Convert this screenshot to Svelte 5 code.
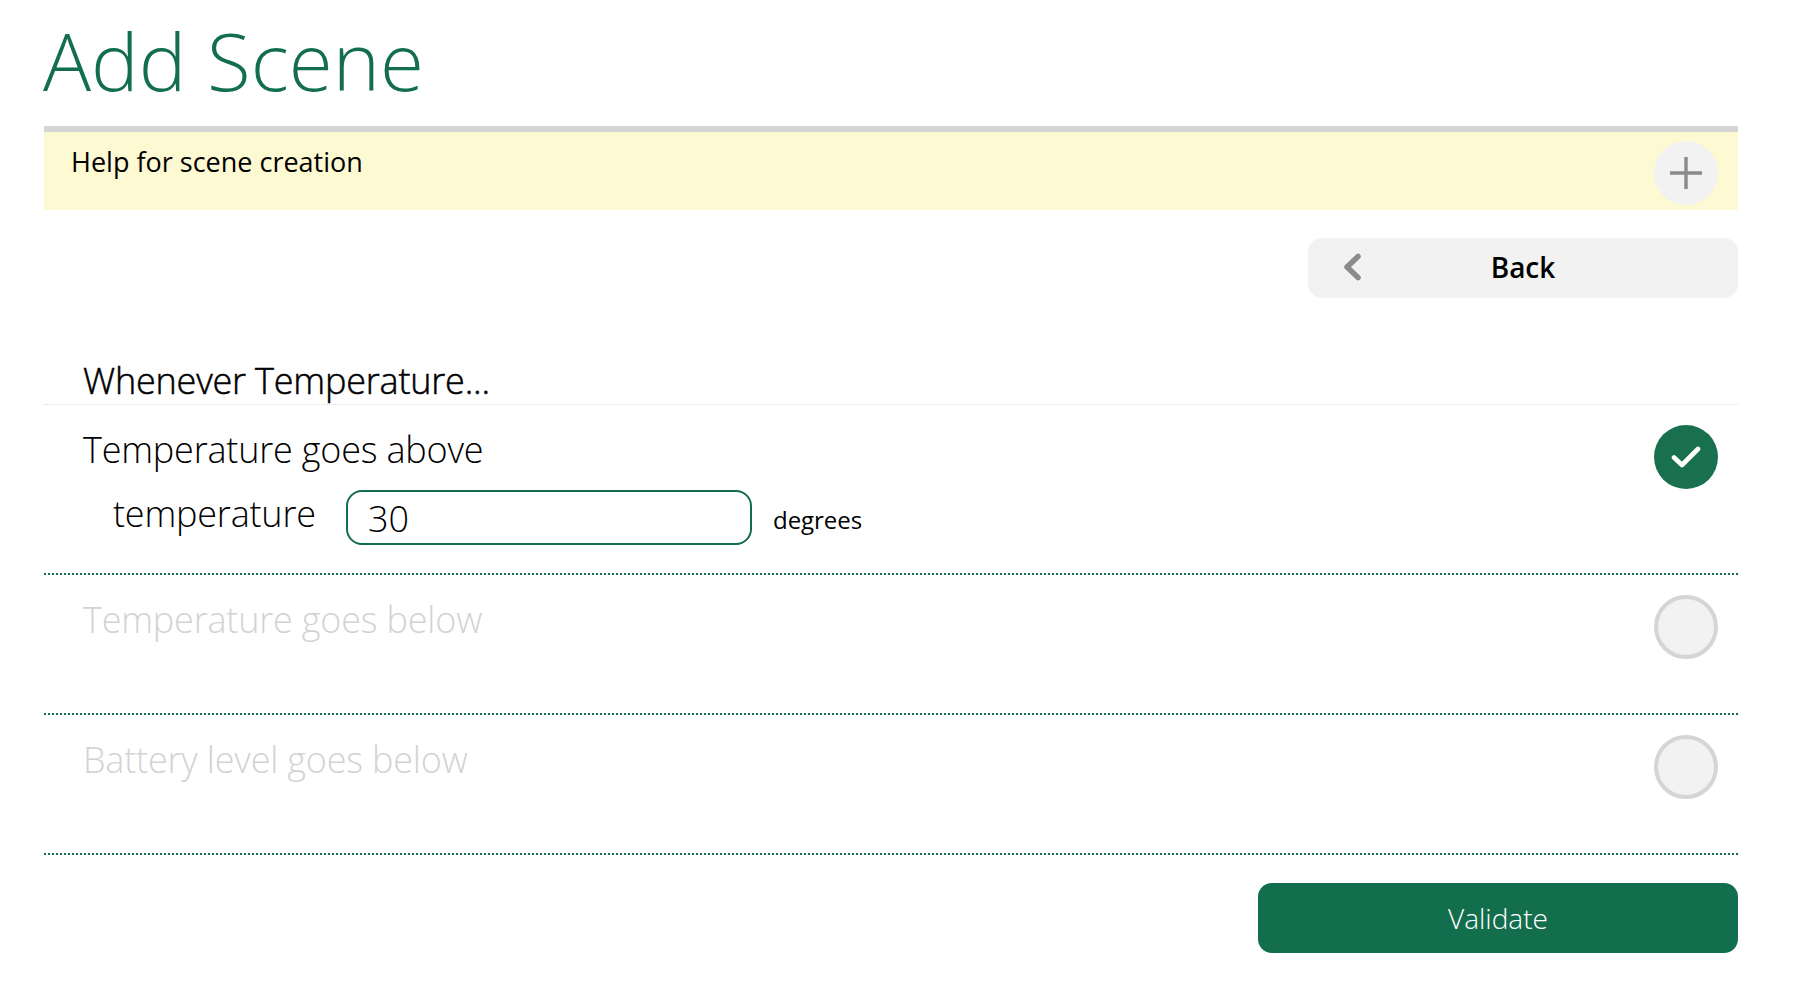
<script>
  const options = [
    { label: 'Temperature goes below' },
    { label: 'Battery level goes below' }
  ];
</script>

<div class="page">
  <h1>Add Scene</h1>

  <section class="help">
    <span class="help-text">Help for scene creation</span>
    <button class="plus" aria-label="Expand help">
      <svg width="32" height="32" viewBox="0 0 32 32"><path d="M16 0.5V31.5M0.5 16H31.5" stroke="#8a8a8a" stroke-width="3.4" stroke-linecap="round" fill="none"/></svg>
    </button>
  </section>

  <div class="actions">
    <button class="back">
      <svg class="chev" width="18" height="28" viewBox="0 0 18 28"><path d="M15 3.5L4 14L15 24.5" stroke="#8b8b8b" stroke-width="5.5" stroke-linecap="round" stroke-linejoin="round" fill="none"/></svg>
      <span>Back</span>
    </button>
  </div>

  <h2>Whenever Temperature...</h2>

  <div class="row">
    <div class="content">
      <div class="label">Temperature goes above</div>
      <div class="field">
        <label for="temp">temperature</label>
        <input id="temp" value="30" />
        <span class="unit">degrees</span>
      </div>
    </div>
    <span class="radio on">
      <svg width="30" height="24" viewBox="0 0 30 24"><path d="M3 12.5L11 20L27 4" stroke="#fff" stroke-width="4.6" stroke-linecap="round" stroke-linejoin="round" fill="none"/></svg>
    </span>
  </div>

  {#each options as o}
    <div class="row off">
      <div class="content"><div class="label">{o.label}</div></div>
      <span class="radio"></span>
    </div>
  {/each}

  <div class="footer"><button class="validate">Validate</button></div>
</div>

<style>
  :global(body) {
    margin: 0;
    background: #fff;
    font-family: "Open Sans", "Liberation Sans", sans-serif;
    color: #000;
  }
  .page {
    padding: 0 74px 0 44px;
    box-sizing: border-box;
  }
  h1 {
    margin: 0 0 0 -1px;
    height: 126px;
    font-size: 80px;
    line-height: 120px;
    font-weight: 300;
    color: #126e4d;
  }
  .help {
    box-sizing: border-box;
    height: 84px;
    border-top: 6px solid #d5d5d5;
    background: #fdf9d3;
    display: flex;
    justify-content: space-between;
    padding: 12px 20px 0 27px;
  }
  .help-text {
    font-size: 27px;
    line-height: 36px;
    font-weight: 400;
  }
  .plus {
    width: 64px;
    height: 64px;
    margin-top: -3px;
    border: 0;
    border-radius: 50%;
    background: #f2f2f2;
    padding: 0;
    display: flex;
    align-items: center;
    justify-content: center;
  }
  .actions {
    display: flex;
    justify-content: flex-end;
    margin-top: 28px;
  }
  .back {
    position: relative;
    width: 430px;
    height: 60px;
    border: 0;
    border-radius: 14px;
    background: #f2f2f2;
    font: 600 28px "Open Sans", sans-serif;
    color: #000;
    padding: 0 0 3px;
  }
  .chev {
    position: absolute;
    left: 35px;
    top: 15px;
  }
  h2 {
    margin: 60px 0 0;
    padding-left: 39px;
    height: 46px;
    font-size: 36px;
    line-height: 46px;
    font-weight: 300;
    letter-spacing: -0.2px;
    -webkit-text-stroke: 0.5px #000;
    border-bottom: 1px dotted #dcdcdc;
  }
  .row {
    box-sizing: border-box;
    display: flex;
    justify-content: space-between;
    border-bottom: 2px dotted #126e4d;
    min-height: 140px;
    padding: 20px 20px 0 39px;
  }
  .label {
    font-size: 36px;
    line-height: 44px;
    font-weight: 300;
    letter-spacing: -0.2px;
    margin-top: 3px;
  }
  .off .label {
    color: #d3d3d3;
  }
  .field {
    display: flex;
    align-items: center;
    margin: 18px 0 28px 30px;
  }
  .field label {
    font-size: 36px;
    font-weight: 300;
    line-height: 44px;
    letter-spacing: -0.2px;
    width: 233px;
    margin-top: -7px;
  }
  .field input {
    box-sizing: border-box;
    width: 406px;
    height: 55px;
    border: 2px solid #126e4d;
    border-radius: 16px;
    padding: 2px 20px 0;
    font: 300 36px "Open Sans", sans-serif;
    color: #000;
    outline: none;
  }
  .unit {
    font-size: 24px;
    letter-spacing: -0.05px;
    margin-left: 21px;
    margin-top: 4px;
  }
  .radio {
    box-sizing: border-box;
    width: 64px;
    height: 64px;
    flex: none;
    border-radius: 50%;
    background: #f2f2f2;
    border: 4px solid #d5d5d5;
    display: flex;
    align-items: center;
    justify-content: center;
  }
  .radio.on {
    background: #19704e;
    border: 0;
  }
  .footer {
    display: flex;
    justify-content: flex-end;
    margin-top: 28px;
  }
  .validate {
    width: 480px;
    height: 70px;
    border: 0;
    border-radius: 14px;
    background: #126e4d;
    color: #fff;
    font: 300 28px "Open Sans", sans-serif;
  }
</style>
